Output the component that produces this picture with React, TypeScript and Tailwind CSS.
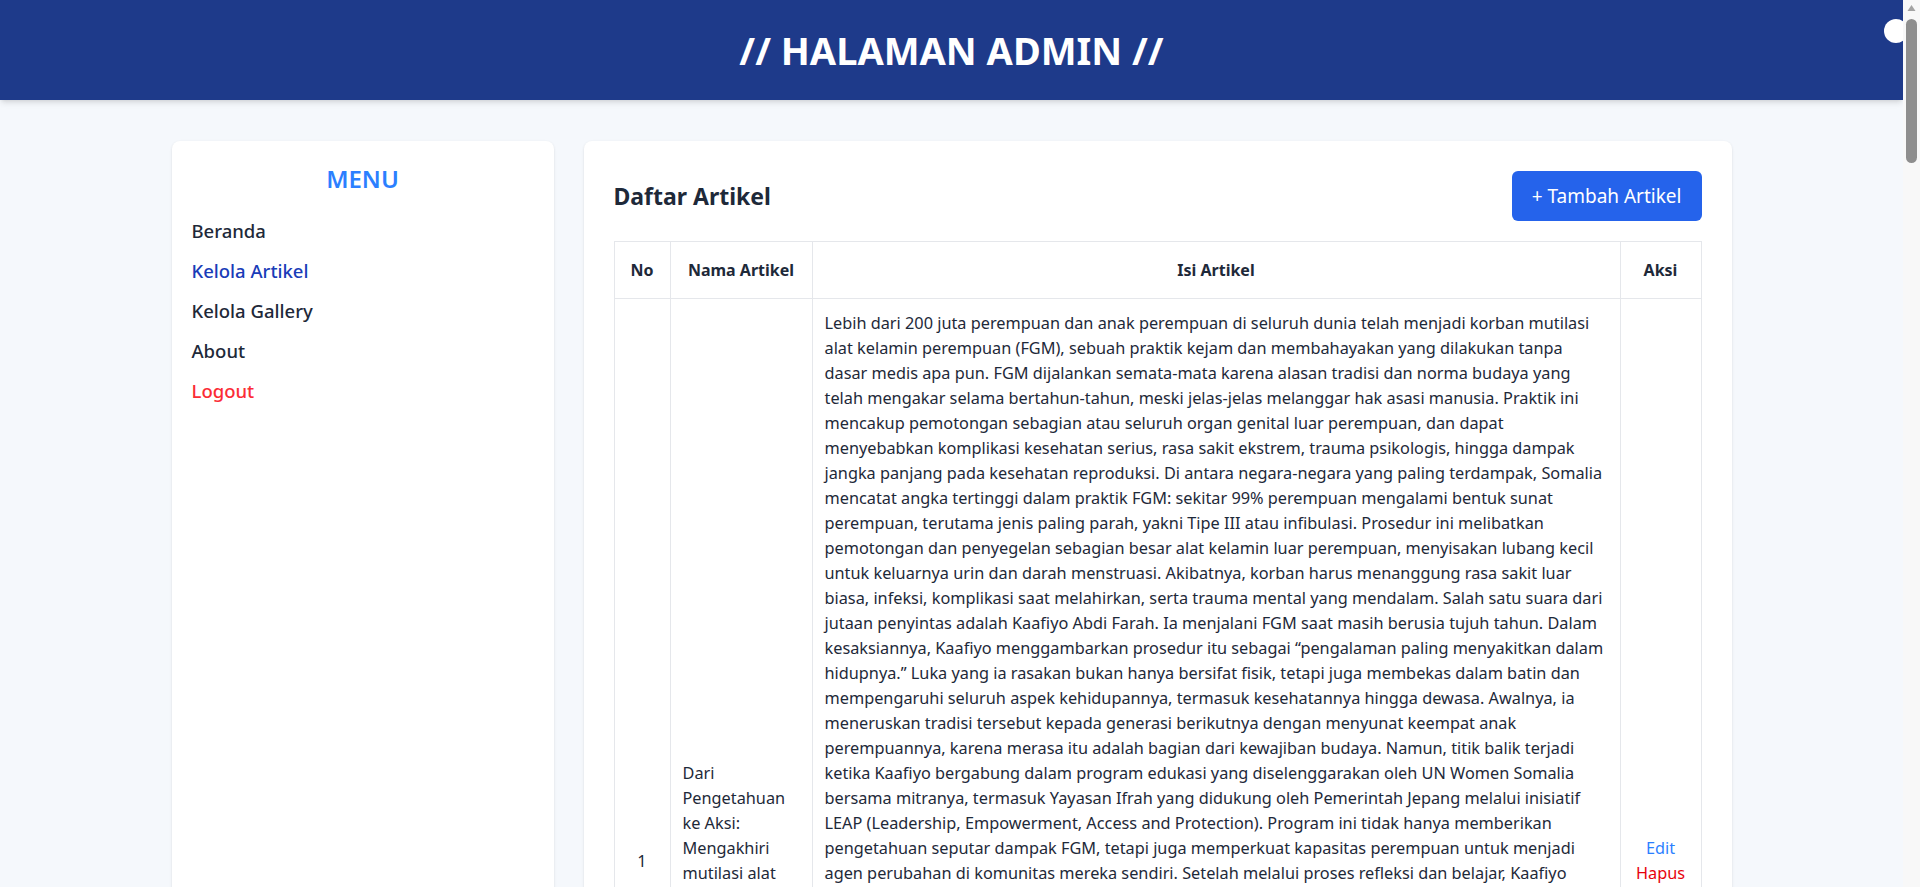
const menuItems = [
  { label: 'Beranda', color: 'text-gray-800' },
  { label: 'Kelola Artikel', color: 'text-blue-800' },
  { label: 'Kelola Gallery', color: 'text-gray-800' },
  { label: 'About', color: 'text-gray-800' },
  { label: 'Logout', color: 'text-red-500' },
];

const articles = [
  {
    id: 1,
    title: 'Dari Pengetahuan ke Aksi: Mengakhiri mutilasi alat kelamin perempuan di Somalia',
    body:
      'Lebih dari 200 juta perempuan dan anak perempuan di seluruh dunia telah menjadi korban mutilasi alat kelamin perempuan (FGM), sebuah praktik kejam dan membahayakan yang dilakukan tanpa dasar medis apa pun. FGM dijalankan semata-mata karena alasan tradisi dan norma budaya yang telah mengakar selama bertahun-tahun, meski jelas-jelas melanggar hak asasi manusia. Praktik ini mencakup pemotongan sebagian atau seluruh organ genital luar perempuan, dan dapat menyebabkan komplikasi kesehatan serius, rasa sakit ekstrem, trauma psikologis, hingga dampak jangka panjang pada kesehatan reproduksi. Di antara negara-negara yang paling terdampak, Somalia mencatat angka tertinggi dalam praktik FGM: sekitar 99% perempuan mengalami bentuk sunat perempuan, terutama jenis paling parah, yakni Tipe III atau infibulasi. Prosedur ini melibatkan pemotongan dan penyegelan sebagian besar alat kelamin luar perempuan, menyisakan lubang kecil untuk keluarnya urin dan darah menstruasi. Akibatnya, korban harus menanggung rasa sakit luar biasa, infeksi, komplikasi saat melahirkan, serta trauma mental yang mendalam. Salah satu suara dari jutaan penyintas adalah Kaafiyo Abdi Farah. Ia menjalani FGM saat masih berusia tujuh tahun. Dalam kesaksiannya, Kaafiyo menggambarkan prosedur itu sebagai \u201cpengalaman paling menyakitkan dalam hidupnya.\u201d Luka yang ia rasakan bukan hanya bersifat fisik, tetapi juga membekas dalam batin dan mempengaruhi seluruh aspek kehidupannya, termasuk kesehatannya hingga dewasa. Awalnya, ia meneruskan tradisi tersebut kepada generasi berikutnya dengan menyunat keempat anak perempuannya, karena merasa itu adalah bagian dari kewajiban budaya. Namun, titik balik terjadi ketika Kaafiyo bergabung dalam program edukasi yang diselenggarakan oleh UN Women Somalia bersama mitranya, termasuk Yayasan Ifrah yang didukung oleh Pemerintah Jepang melalui inisiatif LEAP (Leadership, Empowerment, Access and Protection). Program ini tidak hanya memberikan pengetahuan seputar dampak FGM, tetapi juga memperkuat kapasitas perempuan untuk menjadi agen perubahan di komunitas mereka sendiri. Setelah melalui proses refleksi dan belajar, Kaafiyo menyadari bahwa praktik yang selama ini ia anggap sebagai kewajiban ternyata membawa penderitaan yang panjang bagi anak-anaknya. Ia kemudian memutuskan untuk berhenti mendukung FGM dan mulai berbicara secara terbuka di hadapan keluarga, tetangga, serta tokoh masyarakat di lingkungannya. Dengan keberanian yang tumbuh dari pengalamannya sendiri, Kaafiyo mengajak para ibu untuk melindungi anak perempuan mereka dari praktik berbahaya tersebut. Perjuangannya tidak selalu mudah; ia kerap menghadapi penolakan, cibiran, bahkan tekanan dari orang-orang yang masih memegang teguh tradisi. Namun, Kaafiyo tetap teguh pada pendiriannya. Ia percaya bahwa perubahan harus dimulai dari dalam komunitas itu sendiri, melalui dialog yang jujur dan penuh empati. Kini, Kaafiyo aktif sebagai pendamping dan penggerak di komunitasnya, membantu menyebarkan informasi tentang dampak FGM terhadap kesehatan fisik maupun mental perempuan. Ia juga bekerja sama dengan tenaga kesehatan, pemuka agama, dan aktivis lokal untuk membangun kesadaran bersama bahwa tidak ada alasan budaya maupun agama yang dapat membenarkan kekerasan terhadap tubuh perempuan. Kisah Kaafiyo menjadi bukti bahwa pengetahuan mampu mengubah cara pandang seseorang dan mendorong lahirnya tindakan nyata. Dari seorang penyintas, ia bertransformasi menjadi agen perubahan yang berjuang agar generasi berikutnya dapat tumbuh tanpa luka yang sama. Upaya seperti ini menunjukkan bahwa penghapusan FGM bukanlah hal yang mustahil, selama ada komitmen bersama dari pemerintah, organisasi internasional, dan masyarakat untuk terus bergerak dari pengetahuan menuju aksi. Melalui kisah ini, kita diingatkan bahwa setiap anak perempuan berhak atas tubuh yang utuh, masa depan yang aman, dan kehidupan yang bebas dari rasa takut. Perubahan besar selalu berawal dari langkah kecil yang berani, seperti yang telah dilakukan Kaafiyo bersama komunitasnya.',
  },
];

function Sidebar() {
  return (
    <aside className="w-[382px] shrink-0 bg-white rounded-lg shadow-sm px-5 pt-[22px] pb-5">
      <h2 className="text-center text-2xl font-semibold text-blue-500 mb-[22px]">MENU</h2>
      <nav className="flex flex-col gap-3">
        {menuItems.map((item) => (
          <a key={item.label} href="#" className={`text-[18.5px] leading-7 font-medium ${item.color}`}>
            {item.label}
          </a>
        ))}
      </nav>
    </aside>
  );
}

function ArticleTable() {
  return (
    <table className="w-full table-fixed border-collapse border border-gray-200 text-gray-800">
      <thead>
        <tr>
          <th className="w-[56px] border border-gray-200 py-4 px-3 font-bold text-center">No</th>
          <th className="w-[142px] border border-gray-200 py-4 px-3 font-bold text-center">Nama Artikel</th>
          <th className="border border-gray-200 py-4 px-3 font-bold text-center">Isi Artikel</th>
          <th className="w-[81px] border border-gray-200 py-4 px-3 font-bold text-center">Aksi</th>
        </tr>
      </thead>
      <tbody className="text-[16.3px] leading-[25px]">
        {articles.map((a) => (
          <tr key={a.id}>
            <td className="border border-gray-200 px-3 py-3 text-center align-middle">{a.id}</td>
            <td className="border border-gray-200 px-3 py-3 align-middle">{a.title}</td>
            <td className="border border-gray-200 px-3 py-3 align-middle">{a.body}</td>
            <td className="border border-gray-200 px-3 py-3 text-center align-middle">
              <a href="#" className="block text-blue-500">Edit</a>
              <a href="#" className="block text-red-600">Hapus</a>
            </td>
          </tr>
        ))}
      </tbody>
    </table>
  );
}

// classic browser scrollbar, as in the screenshot
function Scrollbar() {
  return (
    <div className="fixed top-0 right-0 h-screen w-[17px] bg-[#f8f8f8] flex flex-col items-center">
      <svg width="17" height="17" viewBox="0 0 17 17" className="shrink-0">
        <path d="M4.5 11 L8.5 5 L12.5 11 Z" fill="#a3a3a3" />
      </svg>
      <div className="w-[11px] h-[144px] mt-[2px] rounded-full bg-[#8e8e8e]" />
    </div>
  );
}

export default function App() {
  return (
    <div className="min-h-screen bg-[#f5f8fc] font-['Noto_Sans',sans-serif] overflow-x-hidden">
      <div className="mr-[17px]">
        <header className="relative h-[100px] bg-[#1e3a8a] shadow-md flex items-center justify-center overflow-hidden">
          <h1 className="text-white text-[38px] font-bold">// HALAMAN ADMIN //</h1>
          <span className="absolute right-[-5px] top-[19px] w-6 h-6 rounded-full bg-white" />
        </header>

        <div className="mx-auto w-[1560px] flex gap-[30px] pt-[41px] pb-10">
          <Sidebar />
          <main className="flex-1 bg-white rounded-lg shadow-sm p-[30px]">
            <div className="flex items-center justify-between mb-5">
              <h2 className="text-[23px] font-bold text-gray-800">Daftar Artikel</h2>
              <button className="h-[50px] px-5 rounded-md bg-[#2563eb] text-white text-[19px]">
                + Tambah Artikel
              </button>
            </div>
            <ArticleTable />
          </main>
        </div>
      </div>
      <Scrollbar />
    </div>
  );
}
